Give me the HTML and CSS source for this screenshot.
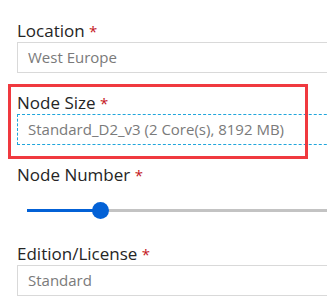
FILE: index.html
```html
<!DOCTYPE html>
<html lang="en">
<head>
  <meta charset="UTF-8" />
  <meta name="viewport" content="width=device-width, initial-scale=1.0" />
  <title>Cluster settings</title>
  <link rel="stylesheet" href="styles.css">
</head>
<body>

  <div class="form">
    <div class="field">
      <label class="field-label">Location <span class="req">*</span></label>
      <div class="input">West Europe</div>
    </div>

    <div class="field highlighted">
      <label class="field-label">Node Size <span class="req">*</span></label>
      <div class="input focused">Standard_D2_v3 (2 Core(s), 8192 MB)</div>
      <span class="callout"></span>
    </div>

    <div class="field slider-field">
      <label class="field-label">Node Number <span class="req">*</span></label>
      <div class="slider">
        <div class="track">
          <div class="track-fill"></div>
          <div class="thumb"></div>
        </div>
      </div>
    </div>

    <div class="field">
      <label class="field-label">Edition/License <span class="req">*</span></label>
      <div class="input">Standard</div>
    </div>
  </div>

</body>
</html>
```

FILE: styles.css
```css
* {
  margin: 0;
  padding: 0;
  box-sizing: border-box;
}

html, body {
  width: 100%;
  height: 100%;
  background-color: #fff;
  font-family: 'Open Sans', 'Noto Sans', sans-serif;
  overflow: hidden;
}

.form {
  padding: 21px 0 0 17px;
}

.field {
  position: relative;
  margin-bottom: 20px;
}

.field-label {
  display: block;
  height: 20px;
  line-height: 20px;
  font-size: 17px;
  color: #252525;
  white-space: nowrap;
}

.req {
  color: #c4161c;
  font-size: 15px;
}

.input {
  margin-top: 1px;
  width: 340px;
  height: 31px;
  line-height: 29px;
  padding-left: 10px;
  border: 1px solid #d9d9d9;
  font-size: 15px;
  color: #7a7a7a;
  white-space: nowrap;
  overflow: hidden;
}

.input.focused {
  border: 1px dashed #1fa5dc;
}

.callout {
  position: absolute;
  top: -9px;
  left: -9px;
  width: 300px;
  height: 75px;
  border: 3px solid #f0393f;
  pointer-events: none;
}

.slider-field {
  margin-bottom: 9px;
}

.slider {
  height: 50px;
  display: flex;
  align-items: center;
  padding-left: 10px;
}

.track {
  position: relative;
  width: 300px;
  height: 3px;
  background-color: #c3c3c3;
}

.track-fill {
  width: 74px;
  height: 100%;
  background-color: #0361d6;
}

.thumb {
  position: absolute;
  top: -7px;
  left: 65px;
  width: 17px;
  height: 17px;
  border-radius: 50%;
  background-color: #0361d6;
}
```
